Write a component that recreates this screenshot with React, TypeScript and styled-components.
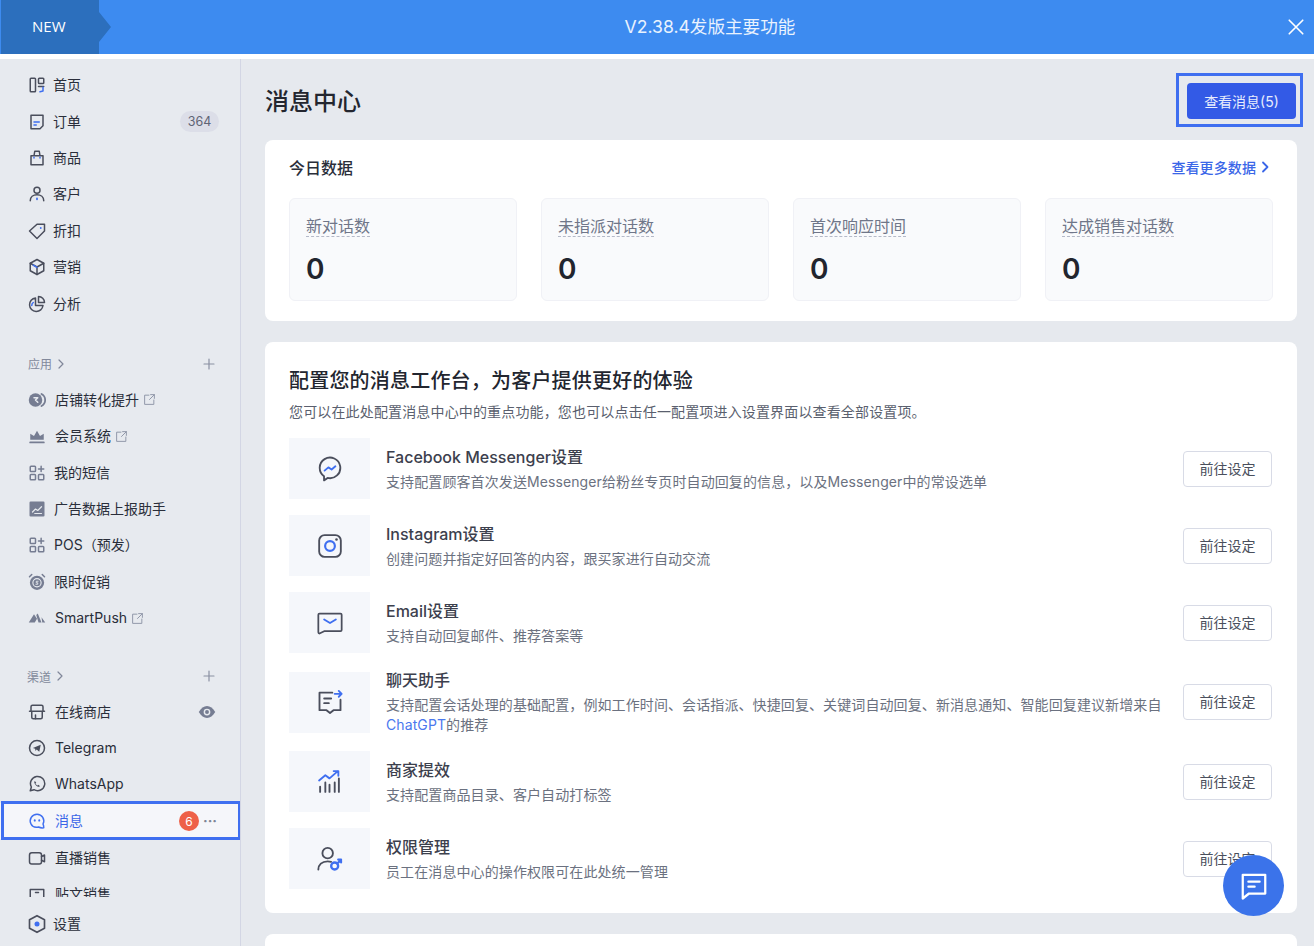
import React from "react"
import styled, { createGlobalStyle } from "styled-components"

const ink = "#4a4e5c"
const accent = "#3f6ff0"
const grey = "#767d92"

const GlobalStyle = createGlobalStyle`
    html, body { margin: 0; padding: 0; height: 100%; }
    body {
        font-family: Inter, "Noto Sans CJK SC", "Liberation Sans", sans-serif;
        color: #2a2e3a;
        overflow: hidden;
    }
    * { box-sizing: border-box; }
`

const Svg = styled.svg.attrs({ viewBox: "0 0 24 24", fill: "none", strokeLinecap: "round", strokeLinejoin: "round" }) <{ $size?: number }>`
    width: ${p => p.$size ?? 18}px;
    height: ${p => p.$size ?? 18}px;
    flex: none;
    display: block;
`

const Link = styled.span`
    color: #4a78ee;
`

const ExternalSvg = styled(Svg)`
    margin-left: -7px;
`

/* ---- sidebar icons ---- */
const HomeIcon = () => <Svg><g stroke={ink} strokeWidth="2"><rect x="3" y="3" width="7" height="18" rx="1" /><rect x="14" y="3" width="7" height="7" rx="1" /><path d="M14 14h7" /></g><path d="M20 15v5l-4 1" stroke={accent} strokeWidth="2" /></Svg>
const OrderIcon = () => <Svg><path d="M4 3h16v14l-4 4H4z" stroke={ink} strokeWidth="2" /><path d="M8 12h7" stroke={accent} strokeWidth="2" /><path d="M8 16h3" stroke={accent} strokeWidth="2" /></Svg>
const BagIcon = () => <Svg><path d="M4 9h16v12H4zM8 9l1-6h6l1 6" stroke={ink} strokeWidth="2" /><path d="M8 11v1M16 11v1" stroke={accent} strokeWidth="2" /></Svg>
const UserIcon = () => <Svg><circle cx="12" cy="7" r="4" stroke={ink} strokeWidth="2" /><path d="M3 21c0-5 4-8 9-8s9 3 9 8" stroke={ink} strokeWidth="2" /><path d="M12 18v1" stroke={accent} strokeWidth="2.4" /></Svg>
const TagIcon = () => <Svg><path d="M2 12 12 3h10v9L12 22z" stroke={ink} strokeWidth="2" /><circle cx="17" cy="8" r="1.2" fill={accent} /></Svg>
const BoxIcon = () => <Svg><path d="M12 2 21 7v10l-9 5-9-5V7z" stroke={ink} strokeWidth="2" /><path d="M3 7l9 5 9-5M12 12v10" stroke={ink} strokeWidth="2" /><path d="M7 9.5l5 3" stroke={accent} strokeWidth="2" /></Svg>
const PieIcon = () => <Svg><path d="M10 4a9 9 0 1 0 10 10h-10z" stroke={ink} strokeWidth="2" /><path d="M14 2a8 8 0 0 1 8 8h-8z" stroke={ink} strokeWidth="2" /><path d="M5 14a5 5 0 0 1 2-4" stroke={accent} strokeWidth="2" /></Svg>

const ConvertIcon = () => <Svg><circle cx="10" cy="12" r="9" fill={grey} /><path d="M18 4a9 9 0 0 1 0 16" stroke={grey} strokeWidth="2.4" /><path d="M8 9h5l-3 3 3 3" stroke="#e7eaef" strokeWidth="2" /></Svg>
const CrownIcon = () => <Svg><path d="M3 9l5 3 4-7 4 7 5-3v8H3z" fill={grey} /><path d="M3 20.5h18" stroke={grey} strokeWidth="2.6" /></Svg>
const AppsIcon = () => <Svg><g stroke={grey} strokeWidth="2"><rect x="3" y="3" width="7" height="7" rx="1" /><rect x="3" y="14" width="7" height="7" rx="1" /><rect x="14" y="14" width="7" height="7" rx="1" /><path d="M17.5 3v7M14 6.5h7" /></g></Svg>
const AdsIcon = () => <Svg><rect x="2" y="2" width="20" height="20" rx="1.5" fill={grey} /><path d="M6 16l4-4 3 2 5-5M9 18h9" stroke="#e7eaef" strokeWidth="1.6" /></Svg>
const ClockIcon = () => <Svg><circle cx="12" cy="13" r="9.5" fill={grey} /><circle cx="12" cy="13" r="5.5" stroke="#e7eaef" strokeWidth="1.5" /><path d="M13.5 11h-2.5v2h2v2h-2.5" stroke="#e7eaef" strokeWidth="1.2" /><path d="M2 5l3-3M22 5l-3-3" stroke={grey} strokeWidth="2" /></Svg>
const PushIcon = () => <Svg><path d="M1 18 8 7l4 6-3 5zM11 8l2-2 5 12h-4zM18 11l5 7h-4z" fill={grey} /></Svg>

const StoreIcon = () => <Svg><path d="M4 10V5a2 2 0 0 1 2-2h12a2 2 0 0 1 2 2v5M5 11v8a2 2 0 0 0 2 2h10a2 2 0 0 0 2-2v-8M2 11h20" stroke={ink} strokeWidth="2" /><path d="M10 21v-5" stroke={ink} strokeWidth="2" /></Svg>
const TelegramIcon = () => <Svg><circle cx="12" cy="12" r="10" stroke={ink} strokeWidth="2" /><path d="M6.5 12 17 7.5 15 17l-3.5-3-1.5 2-.5-3z" fill={ink} /></Svg>
const WhatsappIcon = () => <Svg><path d="M3 21l1.5-5A9.5 9.5 0 1 1 8 19.6z" stroke={ink} strokeWidth="2" /><path d="M9 8c-1 1-1 3 1.5 5.5S15 16 16 15l-2-2-1 1c-1 0-3-2-3-3l1-1z" fill={ink} /></Svg>
const MessageIcon = () => <Svg><path d="M4 16a9 9 0 1 1 16 0c1 2 1 4 1 5-3 .5-5 0-7-1-4 1-8 0-10-4z" stroke={accent} strokeWidth="2" /><path d="M9 11v.5M15 11v.5" stroke={accent} strokeWidth="2.6" /></Svg>
const LiveIcon = () => <Svg><rect x="2" y="5" width="16" height="15" rx="3" stroke={ink} strokeWidth="2" /><path d="M18 10l4-2v9l-4-2" stroke={ink} strokeWidth="2" /></Svg>
const PostIcon = () => <Svg><path d="M3 21V6h18v15" stroke={ink} strokeWidth="2" /><path d="M10 10h4" stroke={ink} strokeWidth="2" /></Svg>
const GearIcon = () => <Svg $size={20}><path d="M12 2l9 5v10l-9 5-9-5V7z" stroke={ink} strokeWidth="2" /><circle cx="12" cy="12" r="3" fill={accent} /></Svg>

const ExternalIcon = () => <ExternalSvg $size={13}><path d="M11 4H3v17h17v-8M14 3h7v7M21 3l-9 9" stroke="#8f96a8" strokeWidth="1.8" /></ExternalSvg>
const EyeIcon = () => <Svg><path d="M1 12c3-5 7-8 11-8s8 3 11 8c-3 5-7 8-11 8s-8-3-11-8z" fill={grey} /><circle cx="12" cy="12" r="4.5" fill="#e7eaef" /><circle cx="12" cy="12" r="2.6" fill={grey} /></Svg>
const ChevronIcon = () => <Svg $size={12}><path d="M8 4l8 8-8 8" stroke="#80879a" strokeWidth="2.4" /></Svg>
const PlusIcon = () => <Svg $size={12}><path d="M12 2v20M2 12h20" stroke="#8a90a2" strokeWidth="2.4" /></Svg>
const CloseIcon = () => <Svg $size={18}><path d="M3 3l18 18M21 3 3 21" stroke="#fff" strokeWidth="2.2" /></Svg>
const BlueChevron = () => <Svg $size={12}><path d="M8 3l9 9-9 9" stroke="#3a66e8" strokeWidth="3.6" /></Svg>

/* ---- config row icons ---- */
const MessengerIcon = () => <Svg $size={26}><path d="M6.5 22.5v-3.8A9.5 9.5 0 1 1 9.8 20.2z" stroke={ink} strokeWidth="1.7" /><path d="M7 13.5l3.5-3 3 2 3.5-3" stroke={accent} strokeWidth="1.7" /></Svg>
const InstagramIcon = () => <Svg $size={26}><rect x="2" y="2" width="20" height="20" rx="5" stroke={ink} strokeWidth="1.7" /><circle cx="12" cy="12" r="4.5" stroke={accent} strokeWidth="2" /><circle cx="18" cy="6" r="1.2" fill={ink} /></Svg>
const EmailIcon = () => <Svg $size={28}><path d="M3 4h18a1 1 0 0 1 1 1v13a1 1 0 0 1-1 1H7l-4 2a1 1 0 0 1-1-1V5a1 1 0 0 1 1-1z" stroke={ink} strokeWidth="1.5" /><path d="M7 9l5 3 5-3" stroke={accent} strokeWidth="1.6" /></Svg>
const AssistantIcon = () => <Svg $size={28}><path d="M14 4H3v15h6l3 2.5 3-2.5h6V10" stroke={ink} strokeWidth="1.6" /><path d="M7 9h6M7 13h4" stroke={ink} strokeWidth="1.6" /><path d="M16 5h6M19.5 2.5 22 5l-2.5 2.5" stroke={accent} strokeWidth="1.6" /></Svg>
const GrowthIcon = () => <Svg $size={25}><path d="M2 11l6-5 4 3 8-7M16 2h4.5v4.5" stroke={accent} strokeWidth="1.8" /><path d="M3 17v5M8 13v9M12 15v7M17 13v9M21 9v13" stroke={ink} strokeWidth="1.8" /></Svg>
const PermissionIcon = () => <Svg $size={28}><circle cx="10" cy="7" r="4.5" stroke={ink} strokeWidth="1.6" /><path d="M2 21c0-4 3-7 8-7 1 0 2 .1 3 .4" stroke={ink} strokeWidth="1.6" /><circle cx="16" cy="18" r="3" stroke={accent} strokeWidth="2" /><path d="M18 16l3.5-3M19 12.5h2.5V15" stroke={accent} strokeWidth="1.8" /></Svg>
const ChatFabIcon = () => <Svg $size={30}><path d="M3 3h18v15H8l-5 4z" stroke="#fff" strokeWidth="1.8" /><path d="M7.5 8.5h9M7.5 12.5h5" stroke="#fff" strokeWidth="1.8" /></Svg>

/* ---- data ---- */
type NavItem = { label: string, icon: React.ReactNode, external?: boolean, gap?: number }

const mainNav: NavItem[] = [
    { label: "首页", icon: <HomeIcon /> },
    { label: "订单", icon: <OrderIcon /> },
    { label: "商品", icon: <BagIcon /> },
    { label: "客户", icon: <UserIcon /> },
    { label: "折扣", icon: <TagIcon /> },
    { label: "营销", icon: <BoxIcon /> },
    { label: "分析", icon: <PieIcon /> },
]

const appNav: NavItem[] = [
    { label: "店铺转化提升", icon: <ConvertIcon />, external: true, gap: 9 },
    { label: "会员系统", icon: <CrownIcon />, external: true, gap: 9 },
    { label: "我的短信", icon: <AppsIcon />, gap: 8 },
    { label: "广告数据上报助手", icon: <AdsIcon />, gap: 8 },
    { label: "POS（预发）", icon: <AppsIcon />, gap: 8 },
    { label: "限时促销", icon: <ClockIcon />, gap: 8 },
    { label: "SmartPush", icon: <PushIcon />, external: true, gap: 9 },
]

const configRows = [
    { title: "Facebook Messenger设置", icon: <MessengerIcon />, desc: "支持配置顾客首次发送Messenger给粉丝专页时自动回复的信息，以及Messenger中的常设选单" },
    { title: "Instagram设置", icon: <InstagramIcon />, desc: "创建问题并指定好回答的内容，跟买家进行自动交流" },
    { title: "Email设置", icon: <EmailIcon />, desc: "支持自动回复邮件、推荐答案等" },
    { title: "聊天助手", icon: <AssistantIcon />, desc: <>支持配置会话处理的基础配置，例如工作时间、会话指派、快捷回复、关键词自动回复、新消息通知、智能回复建议新增来自<Link>ChatGPT</Link>的推荐</> },
    { title: "商家提效", icon: <GrowthIcon />, desc: "支持配置商品目录、客户自动打标签" },
    { title: "权限管理", icon: <PermissionIcon />, desc: "员工在消息中心的操作权限可在此处统一管理" },
]

const stats = ["新对话数", "未指派对话数", "首次响应时间", "达成销售对话数"]

function SideRow({ item, children }: { item: NavItem, children?: React.ReactNode }) {
    return (
        <NavRow $gap={item.gap ?? 7}>
            <IconSlot>{item.icon}</IconSlot>
            <NavLabel>{item.label}</NavLabel>
            {item.external && <ExternalIcon />}
            {children}
        </NavRow>
    )
}

export default function App() {
    return (
        <Page>
            <GlobalStyle />
            <Banner>
                <NewTag>NEW</NewTag>
                <BannerTitle>V2.38.4发版主要功能</BannerTitle>
                <CloseButton><CloseIcon /></CloseButton>
            </Banner>
            <Body>
                <Sidebar>
                    <NavScroll>
                        {mainNav.map((item, i) => (
                            <SideRow item={item} key={item.label}>
                                {i === 1 && <CountBadge>364</CountBadge>}
                            </SideRow>
                        ))}

                        <GroupHead $top={32} $bottom={8}>
                            <span>应用</span><ChevronIcon />
                            <GroupPlus><PlusIcon /></GroupPlus>
                        </GroupHead>
                        {appNav.map(item => <SideRow item={item} key={item.label} />)}

                        <GroupHead $top={30} $bottom={7} $left={27}>
                            <span>渠道</span><ChevronIcon />
                            <GroupPlus><PlusIcon /></GroupPlus>
                        </GroupHead>
                        <SideRow item={{ label: "在线商店", icon: <StoreIcon />, gap: 9 }}>
                            <RowEnd $right={24}><EyeIcon /></RowEnd>
                        </SideRow>
                        <SideRow item={{ label: "Telegram", icon: <TelegramIcon />, gap: 9 }} />
                        <SideRow item={{ label: "WhatsApp", icon: <WhatsappIcon />, gap: 9 }} />
                        <ActiveRow $gap={9}>
                            <IconSlot><MessageIcon /></IconSlot>
                            <NavLabel>消息</NavLabel>
                            <RowEnd $right={23}>
                                <RedBadge>6</RedBadge>
                                <Dots>···</Dots>
                            </RowEnd>
                        </ActiveRow>
                        <SideRow item={{ label: "直播销售", icon: <LiveIcon />, gap: 9 }} />
                        <SideRow item={{ label: "贴文销售", icon: <PostIcon />, gap: 9 }} />
                    </NavScroll>
                    <SideFooter>
                        <GearIcon />
                        <NavLabel>设置</NavLabel>
                    </SideFooter>
                </Sidebar>

                <Main>
                    <TopRow>
                        <PageTitle>消息中心</PageTitle>
                        <PrimaryButton>查看消息(5)</PrimaryButton>
                    </TopRow>

                    <TodayCard>
                        <CardHead>
                            <CardTitle>今日数据</CardTitle>
                            <MoreLink>查看更多数据<BlueChevron /></MoreLink>
                        </CardHead>
                        <StatGrid>
                            {stats.map(s => (
                                <StatCard key={s}>
                                    <StatLabel>{s}</StatLabel>
                                    <StatValue>0</StatValue>
                                </StatCard>
                            ))}
                        </StatGrid>
                    </TodayCard>

                    <ConfigCard>
                        <ConfigTitle>配置您的消息工作台，为客户提供更好的体验</ConfigTitle>
                        <ConfigSub>您可以在此处配置消息中心中的重点功能，您也可以点击任一配置项进入设置界面以查看全部设置项。</ConfigSub>
                        <ConfigList>
                            {configRows.map(r => (
                                <ConfigRow key={r.title}>
                                    <IconTile>{r.icon}</IconTile>
                                    <RowText>
                                        <RowTitle>{r.title}</RowTitle>
                                        <RowDesc>{r.desc}</RowDesc>
                                    </RowText>
                                    <GhostButton>前往设定</GhostButton>
                                </ConfigRow>
                            ))}
                        </ConfigList>
                    </ConfigCard>

                    <EmptyCard />
                </Main>
            </Body>
            <ChatFab><ChatFabIcon /></ChatFab>
        </Page>
    )
}

const Page = styled.div`
    height: 946px;
    display: flex;
    flex-direction: column;
    overflow: hidden;
    background: #fff;
`

const Banner = styled.header`
    height: 54px;
    flex: none;
    background: #3d8bf0;
    color: #fff;
    display: flex;
    align-items: center;
`

const NewTag = styled.div`
    width: 111px;
    height: 54px;
    flex: none;
    margin-left: 1px;
    padding: 0 0 2px 31px;
    display: flex;
    align-items: center;
    background: #2c6fbd;
    font: 500 15px "Open Sans", sans-serif;
    clip-path: polygon(0 0, 98px 0, 98px 12px, 110px 27px, 98px 42px, 98px 54px, 0 54px);
`

const BannerTitle = styled.div`
    flex: 1;
    padding: 0 0 4px 21px;
    text-align: center;
    font-size: 17.6px;
    color: #e9f2fe;
`

const CloseButton = styled.div`
    width: 27px;
    flex: none;
    display: flex;
`

const Body = styled.div`
    flex: 1;
    min-height: 0;
    margin-top: 5px;
    display: flex;
    background: #e6e9ee;
`

const Sidebar = styled.aside`
    width: 241px;
    flex: none;
    display: flex;
    flex-direction: column;
    border-right: 1px solid #d3d6e4;
    background: #e7eaef;
`

const NavScroll = styled.nav`
    height: 838px;
    flex: none;
    padding-top: 8px;
    overflow: hidden;
`

const NavRow = styled.div<{ $gap: number }>`
    position: relative;
    height: 36.4px;
    padding-left: 28px;
    display: flex;
    align-items: center;
    gap: ${p => p.$gap}px;
`

const ActiveRow = styled(NavRow)`
    margin: 0.3px 0;
    color: #3a66e8;
    background: #f5f6fa;
    &::after {
        content: "";
        position: absolute;
        inset: -2px -1px -1px 1px;
        border: 3px solid #3f6ff0;
        background: transparent;
        pointer-events: none;
    }
`

const IconSlot = styled.span`
    display: flex;
`

const NavLabel = styled.span`
    font-size: 14px;
    line-height: 20px;
    margin-right: 2px;
`

const CountBadge = styled.span`
    margin-left: auto;
    margin-right: 21px;
    width: 39px;
    height: 21px;
    border-radius: 11px;
    background: #dcdee8;
    color: #5f6475;
    font-size: 12.5px;
    display: flex;
    align-items: center;
    justify-content: center;
`

const RowEnd = styled.span<{ $right: number }>`
    margin-left: auto;
    margin-right: ${p => p.$right}px;
    display: flex;
    align-items: center;
    gap: 4px;
`

const RedBadge = styled.span`
    width: 20px;
    height: 20px;
    border-radius: 50%;
    background: #ee6048;
    color: #fff;
    font-size: 12px;
    display: flex;
    align-items: center;
    justify-content: center;
`

const Dots = styled.span`
    width: 14px;
    color: #7d8496;
    font-size: 14px;
    font-weight: 700;
    line-height: 1;
    white-space: nowrap;
`

const GroupHead = styled.div<{ $top: number, $bottom: number, $left?: number }>`
    height: 20px;
    margin: ${p => p.$top}px 0 ${p => p.$bottom}px;
    padding-left: ${p => p.$left ?? 28}px;
    display: flex;
    align-items: center;
    gap: 3px;
    font-size: 12px;
    color: #82899b;
`

const GroupPlus = styled.span`
    margin-left: auto;
    margin-right: 25px;
    display: flex;
`

const SideFooter = styled.div`
    flex: 1;
    padding: 4px 0 0 27px;
    display: flex;
    align-items: center;
    gap: 6px;
`

const Main = styled.main`
    flex: 1;
    min-width: 0;
    padding: 24px 17px 0 24px;
    overflow: hidden;
`

const TopRow = styled.div`
    height: 36px;
    margin-bottom: 21px;
    display: flex;
    align-items: center;
    justify-content: space-between;
`

const PageTitle = styled.h1`
    margin: 0 0 3px;
    font-size: 24px;
    font-weight: 500;
    color: #23262f;
`

const PrimaryButton = styled.button`
    position: relative;
    width: 109px;
    height: 36px;
    margin-right: 1px;
    padding: 0;
    border: 0;
    border-radius: 4px;
    background: #335ae6;
    color: #e8edfd;
    font: inherit;
    font-size: 14px;
    &::after {
        content: "";
        position: absolute;
        inset: -10px -7px -8px -11px;
        border: 3px solid #3f6ff0;
    }
`

const Card = styled.section`
    background: #fff;
    border-radius: 8px;
`

const TodayCard = styled(Card)`
    height: 181px;
    padding: 16px 24px 20px;
    margin-bottom: 21px;
`

const CardHead = styled.div`
    height: 24px;
    margin-bottom: 18px;
    padding-bottom: 2px;
    display: flex;
    align-items: center;
    justify-content: space-between;
`

const CardTitle = styled.h2`
    margin: 0;
    font-size: 16px;
    font-weight: 500;
    color: #2a2e3a;
`

const MoreLink = styled.a`
    margin-right: 2px;
    display: flex;
    align-items: center;
    gap: 3px;
    font-size: 14px;
    font-weight: 500;
    letter-spacing: 0.1px;
    color: #3a66e8;
`

const StatGrid = styled.div`
    display: grid;
    grid-template-columns: repeat(4, 1fr);
    gap: 24px;
`

const StatCard = styled.div`
    height: 103px;
    padding: 16px 16px 0;
    border: 1px solid #f0f1f6;
    border-radius: 6px;
    background: #f9fafc;
`

const StatLabel = styled.span`
    display: inline-block;
    font-size: 16px;
    line-height: 20px;
    margin-top: 1px;
    color: #6f7689;
    border-bottom: 1px dashed #b4b9c8;
`

const StatValue = styled.div`
    margin-top: 14px;
    font-size: 28px;
    line-height: 36px;
    font-weight: 600;
    color: #22252e;
`

const ConfigCard = styled(Card)`
    padding: 24px 24px;
    margin-bottom: 21px;
`

const ConfigTitle = styled.h2`
    margin: 1px 0 7px;
    font-size: 20px;
    line-height: 28px;
    font-weight: 500;
    letter-spacing: 0.2px;
    color: #23262f;
`

const ConfigSub = styled.p`
    margin: 0 0 16px;
    font-size: 14px;
    line-height: 20px;
    letter-spacing: 0.15px;
    color: #5a5f6e;
`

const ConfigList = styled.div`
    display: flex;
    flex-direction: column;
    gap: 16px;
`

const ConfigRow = styled.div`
    min-height: 61px;
    display: flex;
    align-items: center;
    gap: 16px;
`

const IconTile = styled.div`
    width: 81px;
    height: 61px;
    flex: none;
    background: #f5f7fb;
    display: flex;
    align-items: center;
    justify-content: center;
`

const RowText = styled.div`
    flex: 1;
    min-width: 0;
`

const RowTitle = styled.div`
    font-size: 16px;
    line-height: 22px;
    margin-bottom: 4px;
    font-weight: 500;
    color: #3c404d;
`

const RowDesc = styled.div`
    font-size: 14px;
    line-height: 20px;
    letter-spacing: 0.1px;
    color: #6b7180;
`

const GhostButton = styled.button`
    width: 89px;
    height: 36px;
    flex: none;
    margin-right: 1px;
    padding: 0 0 2px;
    border: 1px solid #d8dbe6;
    border-radius: 4px;
    background: #fff;
    color: #4a4f5c;
    font: inherit;
    font-size: 14px;
`

const EmptyCard = styled(Card)`
    height: 120px;
`

const ChatFab = styled.div`
    position: fixed;
    left: 1223px;
    top: 855px;
    width: 61px;
    height: 61px;
    border-radius: 50%;
    background: #3b73ea;
    display: flex;
    align-items: center;
    justify-content: center;
`
